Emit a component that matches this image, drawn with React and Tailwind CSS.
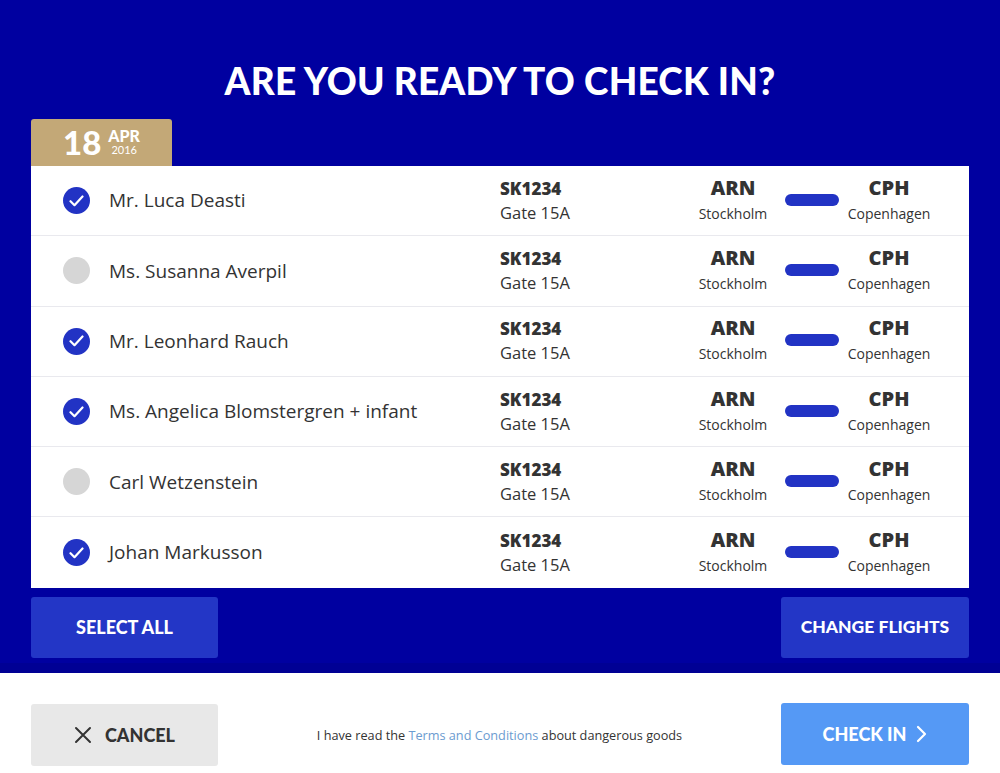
import React, { useState } from 'react';

const passengers = [
  { id: 1, name: 'Mr. Luca Deasti', checked: true },
  { id: 2, name: 'Ms. Susanna Averpil', checked: false },
  { id: 3, name: 'Mr. Leonhard Rauch', checked: true },
  { id: 4, name: 'Ms. Angelica Blomstergren + infant', checked: true },
  { id: 5, name: 'Carl Wetzenstein', checked: false },
  { id: 6, name: 'Johan Markusson', checked: true },
];

function CheckCircle({ checked, onClick }) {
  if (!checked) {
    return <button onClick={onClick} className="w-[27px] h-[27px] rounded-full bg-[#d6d6d6] shrink-0" />;
  }
  return (
    <button onClick={onClick} className="w-[27px] h-[27px] rounded-full bg-[#2233c4] shrink-0 flex items-center justify-center">
      <svg width="15" height="12" viewBox="0 0 15 12" fill="none">
        <path d="M1.5 6.2 L5.5 10.2 L13.5 1.5" stroke="white" strokeWidth="2.2" strokeLinecap="round" strokeLinejoin="round" />
      </svg>
    </button>
  );
}

function PassengerRow({ passenger, onToggle, last }) {
  return (
    <div className={`h-[70.3px] flex items-center ${last ? '' : 'border-b border-[#e9e9ee]'}`}>
      <div className="w-[78px] flex justify-end pr-[19px]">
        <CheckCircle checked={passenger.checked} onClick={onToggle} />
      </div>
      <div className="w-[391px] text-[19px] text-[#333]">{passenger.name}</div>
      <div className="w-[181px] leading-[24px]">
        <div className="text-[17px] font-extrabold text-[#333]">SK1234</div>
        <div className="text-[16.5px] text-[#333]">Gate 15A</div>
      </div>
      <div className="w-[104px] flex flex-col items-center leading-[26px]">
        <div className="text-[20px] font-black text-[#333]">ARN</div>
        <div className="text-[14px] text-[#333]">Stockholm</div>
      </div>
      <div className="w-[54px] h-[12px] rounded-full bg-[#2233c4] mt-[-2px]" />
      <div className="w-[100px] flex flex-col items-center leading-[26px]">
        <div className="text-[20px] font-black text-[#333]">CPH</div>
        <div className="text-[14px] text-[#333]">Copenhagen</div>
      </div>
    </div>
  );
}

export default function App() {
  const [list, setList] = useState(passengers);

  const toggle = (id) => {
    setList(list.map(p => (p.id === id ? { ...p, checked: !p.checked } : p)));
  };

  const selectAll = () => {
    setList(list.map(p => ({ ...p, checked: true })));
  };

  return (
    <div className="w-[1000px] h-[773px] flex flex-col" style={{ fontFamily: '"Open Sans", "Noto Sans", sans-serif' }}>
      <div className="h-[673px] bg-[#0000a0] px-[31px] flex flex-col border-b-[10px] border-[#000094]">
        <h1
          className="text-center text-white text-[37px] font-black tracking-[0.2px] pt-[57px] leading-[48px]"
          style={{ fontFamily: 'Lato, sans-serif' }}
        >
          ARE YOU READY TO CHECK IN?
        </h1>
        <div className="mt-[14px] w-[141px] h-[47px] bg-[#c3a877] rounded-t-[3px] flex items-center justify-center gap-[7px]" style={{ fontFamily: 'Lato, sans-serif' }}>
          <span className="text-white text-[33px] font-black leading-none">18</span>
          <div className="flex flex-col items-center leading-none mt-[-2px]">
            <span className="text-white text-[16px] font-black">APR</span>
            <span className="text-white text-[11px]">2016</span>
          </div>
        </div>
        <div className="bg-white">
          {list.map((p, i) => (
            <PassengerRow key={p.id} passenger={p} onToggle={() => toggle(p.id)} last={i === list.length - 1} />
          ))}
        </div>
        <div className="mt-[9px] flex justify-between" style={{ fontFamily: 'Lato, sans-serif' }}>
          <button onClick={selectAll} className="w-[187px] h-[61px] bg-[#2336c6] rounded-[3px] text-white text-[18px] font-black">
            SELECT ALL
          </button>
          <button className="w-[188px] h-[61px] bg-[#2336c6] rounded-[3px] text-white text-[17.5px] font-black">
            CHANGE FLIGHTS
          </button>
        </div>
      </div>
      <div className="flex-1 bg-white px-[31px] flex items-start justify-between pt-[31px]">
        <button className="w-[187px] h-[62px] bg-[#e8e8e8] rounded-[3px] flex items-center justify-center gap-[13px] text-[#333] text-[18px] font-black" style={{ fontFamily: 'Lato, sans-serif' }}>
          <svg width="18" height="18" viewBox="0 0 18 18" fill="none">
            <path d="M2 2 L16 16 M16 2 L2 16" stroke="#333" strokeWidth="2" strokeLinecap="round" />
          </svg>
          CANCEL
        </button>
        <p className="text-[12.7px] text-[#333] leading-[62px]">
          I have read the <a className="text-[#6b9bd0]">Terms and Conditions</a> about dangerous goods
        </p>
        <button className="w-[188px] h-[62px] mt-[-1px] bg-[#5599f5] rounded-[3px] flex items-center justify-center gap-[10px] text-white text-[18px] font-black" style={{ fontFamily: 'Lato, sans-serif' }}>
          CHECK IN
          <svg width="11" height="18" viewBox="0 0 11 18" fill="none">
            <path d="M2 2 L9 9 L2 16" stroke="white" strokeWidth="2.2" strokeLinecap="round" strokeLinejoin="round" />
          </svg>
        </button>
      </div>
    </div>
  );
}
